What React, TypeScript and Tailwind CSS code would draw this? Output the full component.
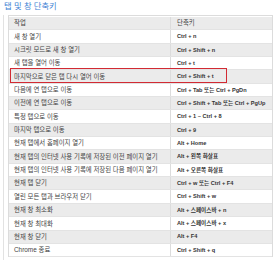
const rows: [string, string][] = [
  ['새 창 열기', 'Ctrl + n'],
  ['시크릿 모드로 새 창 열기', 'Ctrl + Shift + n'],
  ['새 탭을 열어 이동', 'Ctrl + t'],
  ['마지막으로 닫은 탭 다시 열어 이동', 'Ctrl + Shift + t'],
  ['다음에 연 탭으로 이동', 'Ctrl + Tab 또는 Ctrl + PgDn'],
  ['이전에 연 탭으로 이동', 'Ctrl + Shift + Tab 또는 Ctrl + PgUp'],
  ['특정 탭으로 이동', 'Ctrl + 1 ~ Ctrl + 8'],
  ['마지막 탭으로 이동', 'Ctrl + 9'],
  ['현재 탭에서 홈페이지 열기', 'Alt + Home'],
  ['현재 탭의 인터넷 사용 기록에 저장된 이전 페이지 열기', 'Alt + 왼쪽 화살표'],
  ['현재 탭의 인터넷 사용 기록에 저장된 다음 페이지 열기', 'Alt + 오른쪽 화살표'],
  ['현재 탭 닫기', 'Ctrl + w 또는 Ctrl + F4'],
  ['열린 모든 탭과 브라우저 닫기', 'Ctrl + Shift + w'],
  ['현재 창 최소화', 'Alt + 스페이스바 + n'],
  ['현재 창 최대화', 'Alt + 스페이스바 + x'],
  ['현재 창 닫기', 'Alt + F4'],
  ['Chrome 종료', 'Ctrl + Shift + q'],
];

function Row({ task, keys, header, shaded, marked }: { task: string; keys: string; header?: boolean; shaded: boolean; marked?: boolean }) {
  return (
    <div className={`relative grid grid-cols-[162px_1fr] h-[13.35px] border-b border-[#e3e3e3] ${shaded ? 'bg-[#ebebeb]' : 'bg-white'}`}>
      <div className="flex items-center pl-[5px] border-r border-[#dcdcdc] text-[6.4px] text-[#444] whitespace-nowrap overflow-hidden">
        {task}
      </div>
      <div className={`flex items-center pl-[6px] whitespace-nowrap overflow-hidden ${header ? 'text-[6.4px] text-[#444]' : 'text-[5.6px] font-bold text-[#333]'}`}>
        {keys}
      </div>
      {marked && (
        <div className="absolute left-[1px] top-[-2px] w-[217px] h-[15px] border-[1.5px] border-[#d22a33]" />
      )}
    </div>
  );
}

export default function App() {
  return (
    <div className="w-[276px] h-[260px] bg-white overflow-hidden" style={{ fontFamily: '"Liberation Sans", "Noto Sans CJK KR", sans-serif' }}>
      <div className="pl-[4px] pt-[1px] h-[15px] text-[8.3px] leading-[11px] text-[#3f84d4]">탭 및 창 단축키</div>
      <div className="ml-[3px] border-l border-[#e2e2e2] pl-[4px] h-[245px]">
        <div className="w-[265px] border-t border-r border-l border-[#dcdcdc] pt-[1px]">
          <Row task="작업" keys="단축키" header shaded />
          {rows.map(([task, keys], i) => (
            <Row key={task + i} task={task} keys={keys} shaded={i % 2 === 1} marked={i === 3} />
          ))}
        </div>
      </div>
    </div>
  );
}
